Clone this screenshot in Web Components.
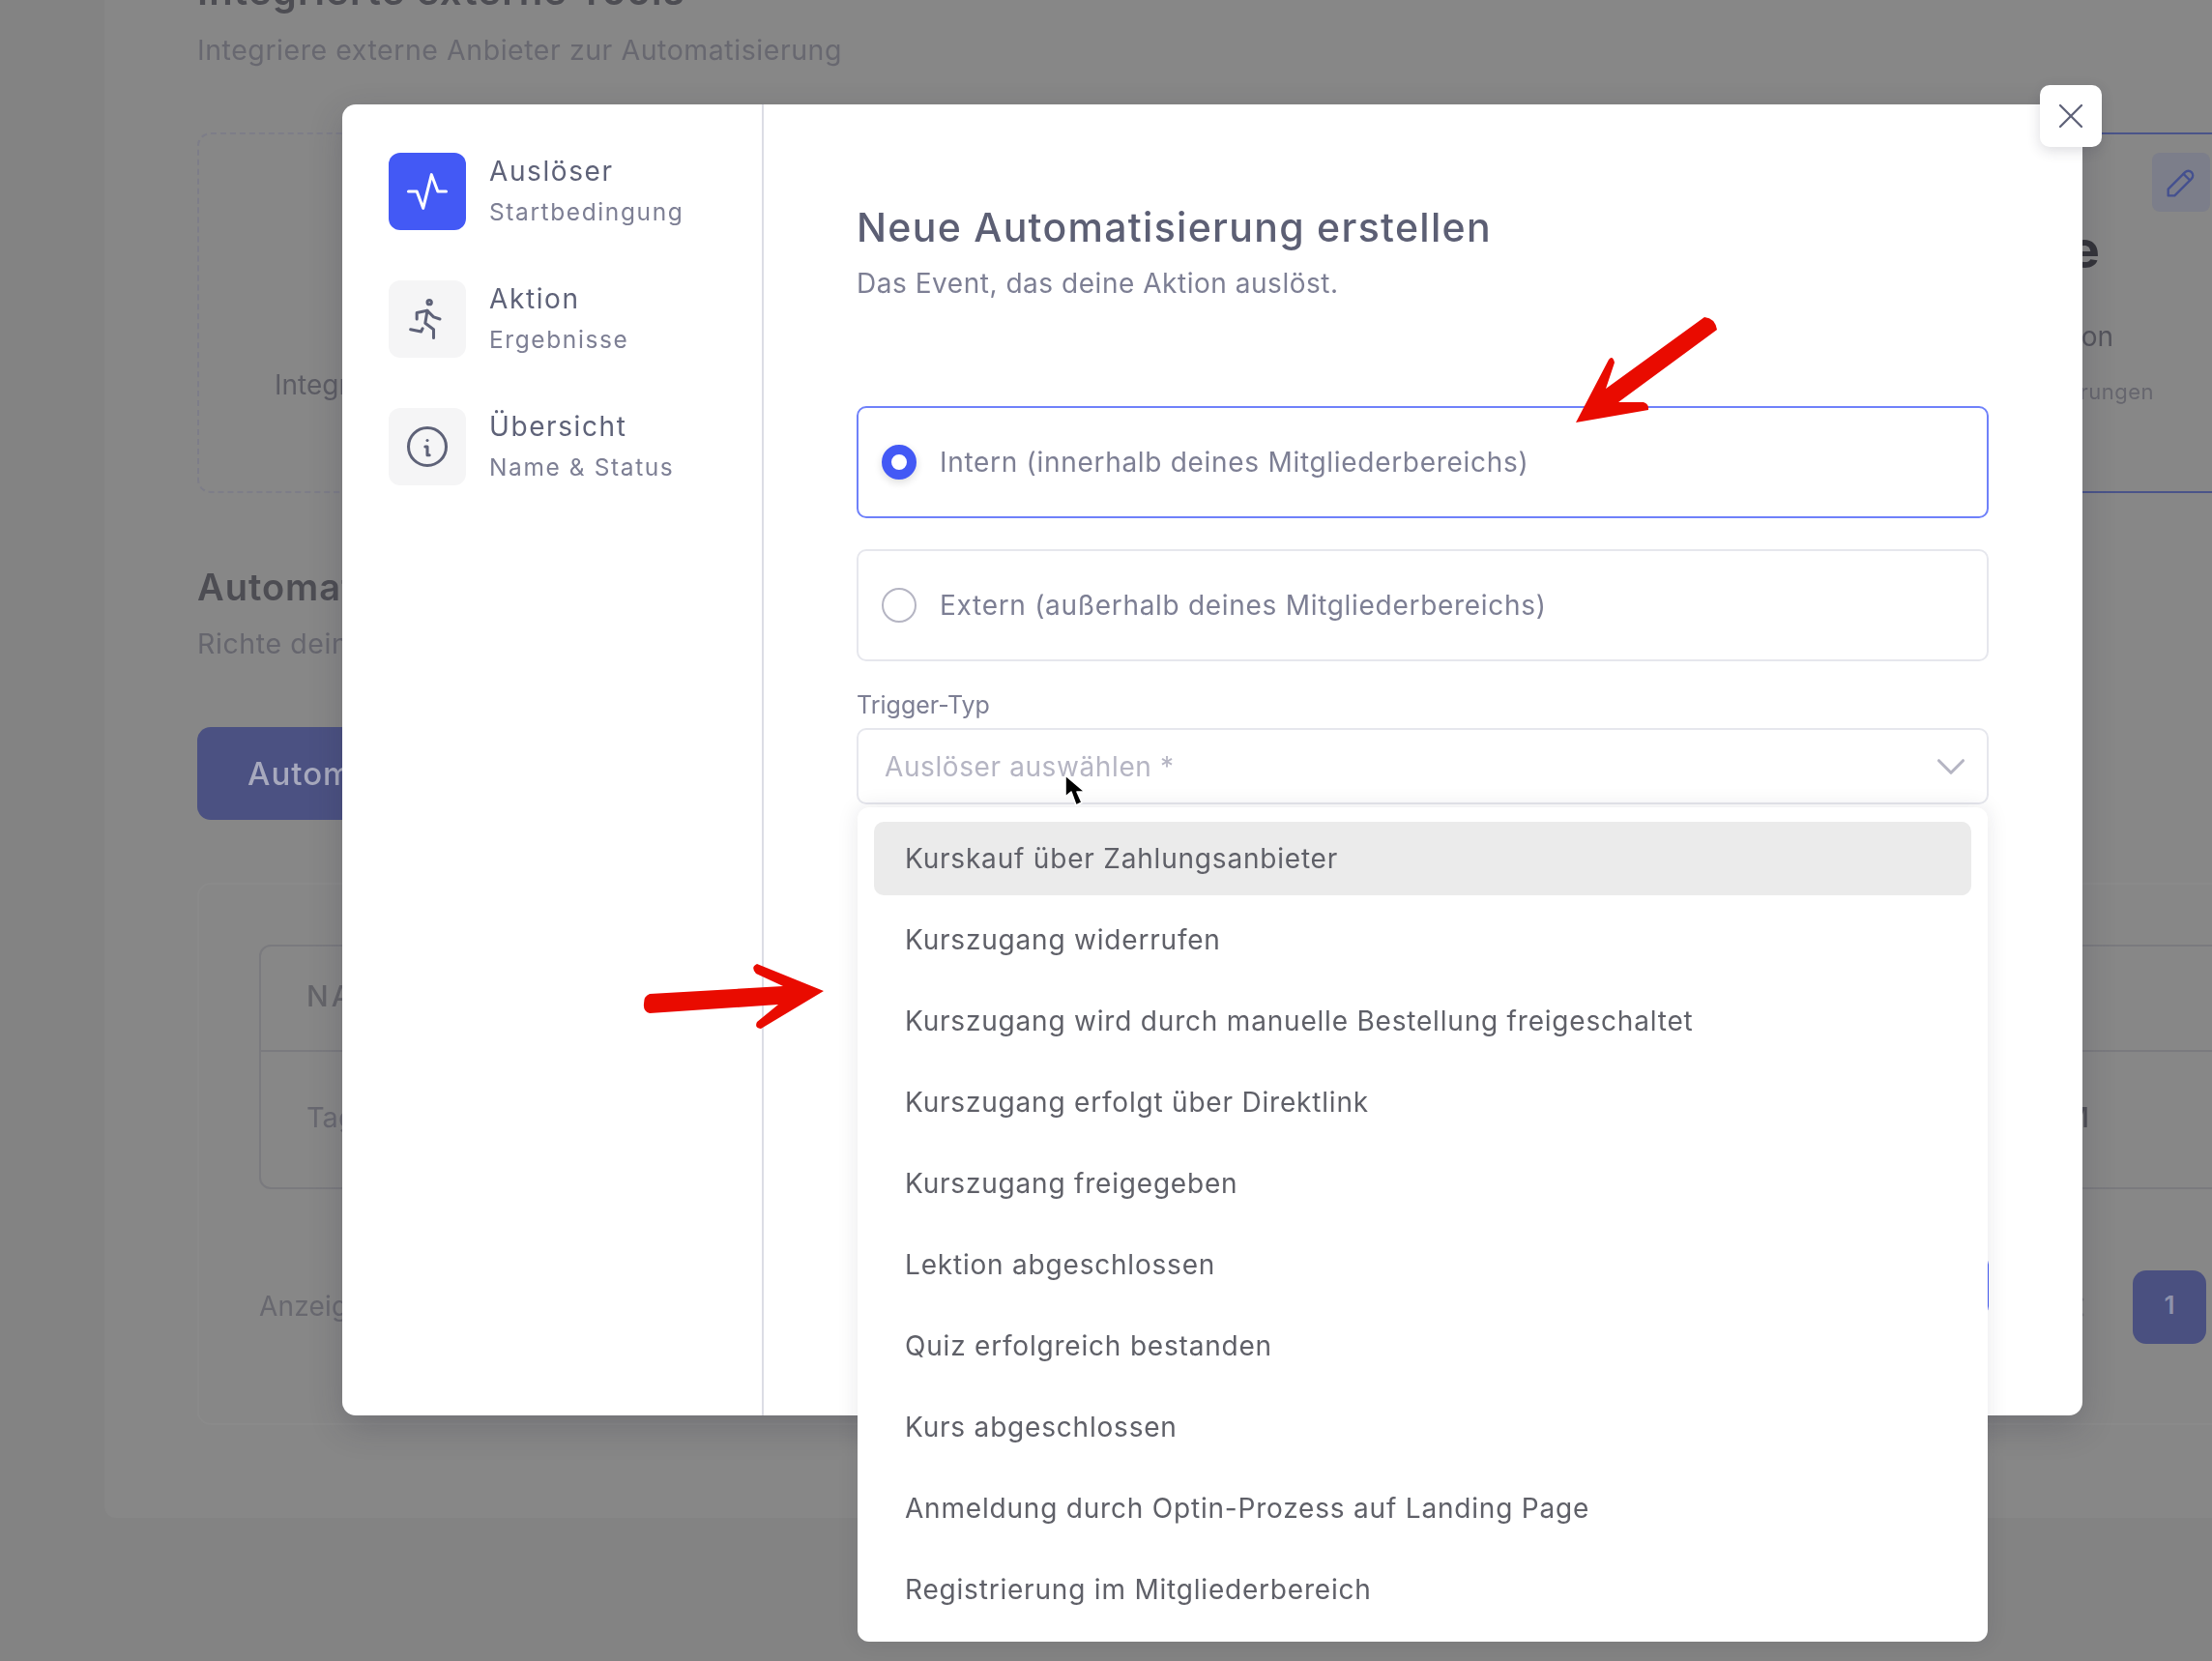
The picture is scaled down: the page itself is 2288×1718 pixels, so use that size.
<!DOCTYPE html>
<html lang="de">
<head>
<meta charset="utf-8">
<title>Automatisierung</title>
<style>
    html, body { margin: 0; padding: 0; }
    body { width: 2288px; height: 1718px; overflow: hidden; background: #838383; font-family: Inter, "Noto Sans", sans-serif; }
</style>
</head>
<body>
<app-stage>
    <backdrop-page></backdrop-page>
    <automation-modal>
        <step-item slot="steps" icon="activity" active label="Auslöser" hint="Startbedingung"></step-item>
        <step-item slot="steps" icon="run" label="Aktion" hint="Ergebnisse"></step-item>
        <step-item slot="steps" icon="info" label="Übersicht" hint="Name &amp; Status"></step-item>
        <radio-card checked>Intern (innerhalb deines Mitgliederbereichs)</radio-card>
        <radio-card>Extern (außerhalb deines Mitgliederbereichs)</radio-card>
        <trigger-select label="Trigger-Typ" placeholder="Auslöser auswählen *">
            <option-item selected>Kurskauf über Zahlungsanbieter</option-item>
            <option-item>Kurszugang widerrufen</option-item>
            <option-item>Kurszugang wird durch manuelle Bestellung freigeschaltet</option-item>
            <option-item>Kurszugang erfolgt über Direktlink</option-item>
            <option-item>Kurszugang freigegeben</option-item>
            <option-item>Lektion abgeschlossen</option-item>
            <option-item>Quiz erfolgreich bestanden</option-item>
            <option-item>Kurs abgeschlossen</option-item>
            <option-item>Anmeldung durch Optin-Prozess auf Landing Page</option-item>
            <option-item>Registrierung im Mitgliederbereich</option-item>
        </trigger-select>
    </automation-modal>
    <screen-notes></screen-notes>
</app-stage>

<script>
const ICONS = {
    activity: '<path d="M3 12h4l3 8l4 -16l3 8h4"/>',
    run: '<path d="M12 4a1 1 0 1 0 2 0a1 1 0 1 0 -2 0"/><path d="M4 17l5 1l.75 -1.5"/><path d="M15 21l0 -4l-4 -3l1 -6"/><path d="M7 12l0 -3l5 -1l3 3l3 1"/>',
    info: '<path d="M3 12a9 9 0 1 0 18 0a9 9 0 0 0 -18 0"/><path d="M12 9h.01"/><path d="M11 12h1v4h1"/>',
    close: '<path d="M18 6l-12 12"/><path d="M6 6l12 12"/>',
    chevron: '<path d="M6 9l6 6l6 -6"/>',
    back: '<path d="M15 6l-6 6l6 6"/>',
    pencil: '<path d="M4 20h4l10.5 -10.5a2.828 2.828 0 1 0 -4 -4l-10.5 10.5v4"/><path d="M13.5 6.5l4 4"/>'
};

class TablerIcon extends HTMLElement {
    constructor() {
        super();
        this.shadowDOM = this.attachShadow({mode: "open"});
    }

    connectedCallback() {
        const size = this.getAttribute("size") || 24;
        const stroke = this.getAttribute("stroke") || 1.4;
        this.shadowDOM.innerHTML = `
            <style>
                :host { display: block; width: ${size}px; height: ${size}px; }
                svg { display: block; }
            </style>
            <svg width="${size}" height="${size}" viewBox="0 0 24 24" fill="none" stroke="currentColor"
                 stroke-width="${stroke}" stroke-linecap="round" stroke-linejoin="round">${ICONS[this.getAttribute("name")]}</svg>`;
    }
}

class AppStage extends HTMLElement {
    constructor() {
        super();
        this.shadowDOM = this.attachShadow({mode: "open"});
        this.shadowDOM.innerHTML = `
            <style>
                :host { display: block; position: relative; width: 2288px; height: 1718px; overflow: hidden; }
            </style>
            <slot></slot>`;
    }
}

class BackdropPage extends HTMLElement {
    constructor() {
        super();
        this.shadowDOM = this.attachShadow({mode: "open"});
        this.shadowDOM.innerHTML = `
            <style>
                * { margin: 0; padding: 0; box-sizing: border-box; }
                :host { display: block; height: 1718px; overflow: hidden; filter: blur(.6px); }
                .sheet {
                    display: flow-root;
                    width: 2202px;
                    height: 1570px;
                    margin-left: 108px;
                    padding: 0 0 0 96px;
                    background: #878787;
                    border-radius: 0 0 0 12px;
                    color: #4d4d53;
                }
                h1 { margin-top: -31px; font-size: 40px; line-height: 44px; font-weight: 600; letter-spacing: 1.2px; }
                .lead { margin-top: 21px; font-size: 28.5px; line-height: 36px; color: #686870; letter-spacing: .55px; }
                .tools { display: flex; gap: 90px; margin-top: 67px; height: 373px; }
                .dashed {
                    width: 560px;
                    border: 2px dashed #7d7d88;
                    border-radius: 14px;
                    padding: 241px 0 0 78px;
                    font-size: 28px;
                    line-height: 36px;
                    color: #5c5c64;
                }
                .linked {
                    position: relative;
                    flex: 1;
                    border: 2px solid #4a5489;
                    border-radius: 14px;
                    padding-top: 89px;
                    text-align: right;
                }
                .linked b { display: block; margin-right: 136px; font-size: 54px; line-height: 60px; font-weight: 700; color: #34343a; }
                .linked span { display: block; margin-top: 42px; margin-right: 122px; font-size: 28px; line-height: 36px; color: #54545c; }
                .linked small { display: block; margin-top: 25px; margin-right: 80px; font-size: 22px; line-height: 28px; color: #66666e; letter-spacing: .5px; }
                .edit {
                    position: absolute;
                    top: 19px;
                    right: 22px;
                    display: flex;
                    align-items: center;
                    justify-content: center;
                    width: 60px;
                    height: 61px;
                    border-radius: 8px;
                    background: #7c7e8a;
                    color: #44508f;
                }
                h2 { margin-top: 74px; font-size: 38px; line-height: 46px; font-weight: 600; color: #4d4d53; letter-spacing: 1px; }
                .lead2 { margin-top: 18px; font-size: 28.5px; line-height: 36px; color: #66666e; letter-spacing: .6px; }
                .create {
                    display: block;
                    width: 520px;
                    height: 96px;
                    margin-top: 68px;
                    padding-left: 52px;
                    border-radius: 14px;
                    background: #4b5182;
                    color: #a7a9bd;
                    font-size: 33px;
                    line-height: 96px;
                    font-weight: 500;
                    letter-spacing: 1px;
                }
                .table-card {
                    margin-top: 65px;
                    height: 561px;
                    padding: 62px 0 0 62px;
                    border: 2px solid #8a8a8a;
                    border-radius: 14px;
                }
                .table { border: 2px solid #7a7a7e; border-radius: 12px; height: 253px; }
                .row { display: flex; justify-content: space-between; align-items: center; padding: 0 145px 0 47px; }
                .row span { margin-top: -5px; }
                .row.head { height: 109px; border-bottom: 2px solid #7a7a7e; font-size: 30px; letter-spacing: 3px; color: #646469; font-weight: 500; }
                .row.body { height: 140px; font-size: 29px; color: #686870; }
                .row.body b { margin-top: -5px; font-weight: 500; color: #4f4f55; }
                .pager { display: flex; align-items: center; justify-content: space-between; margin-top: 84px; padding-right: 26px; height: 76px; font-size: 28px; color: #68686f; letter-spacing: .2px; }
                .pager > span { margin-top: -3px; }
                .pager div { display: flex; align-items: center; gap: 40px; }
                .pager tabler-icon { color: #707075; }
                .pager i {
                    display: block;
                    width: 76px;
                    height: 76px;
                    border-radius: 14px;
                    background: #4a5080;
                    color: #8f92ab;
                    font-style: normal;
                    font-weight: 600;
                    text-align: center;
                    line-height: 72px;
                    font-size: 26px;
                }
            </style>
            <div class="sheet">
                <h1>Integrierte externe Tools</h1>
                <p class="lead">Integriere externe Anbieter zur Automatisierung</p>
                <div class="tools">
                    <div class="dashed">Integration hinzufügen</div>
                    <div class="linked">
                        <div class="edit"><tabler-icon name="pencil" size="40" stroke="1.4"></tabler-icon></div>
                        <b>Make</b>
                        <span>Integration</span>
                        <small>Automatisierungen</small>
                    </div>
                </div>
                <h2>Automatisierungen</h2>
                <p class="lead2">Richte deine Automatisierungen ein</p>
                <div class="create">Automatisierung erstellen</div>
                <div class="table-card">
                    <div class="table">
                        <div class="row head"><span>NAME</span><span></span></div>
                        <div class="row body"><span>Tag</span><b>PM</b></div>
                    </div>
                    <div class="pager">
                        <span>Anzeigen</span>
                        <div><tabler-icon name="back" size="32" stroke="2"></tabler-icon><i>1</i></div>
                    </div>
                </div>
            </div>`;
    }
}

class AutomationModal extends HTMLElement {
    constructor() {
        super();
        this.shadowDOM = this.attachShadow({mode: "open"});
        this.shadowDOM.innerHTML = `
            <style>
                * { margin: 0; padding: 0; box-sizing: border-box; }
                :host {
                    position: absolute;
                    left: 354px;
                    top: 108px;
                    display: flex;
                    width: 1800px;
                    height: 1356px;
                    border-radius: 14px;
                    background: #fff;
                    box-shadow: 0 12px 34px rgba(40, 40, 60, .22);
                }
                .side {
                    display: flex;
                    flex-direction: column;
                    gap: 52px;
                    width: 436px;
                    padding: 50px 0 0 48px;
                    border-right: 2px solid #dcdde5;
                }
                .main {
                    display: flex;
                    flex-direction: column;
                    flex: none;
                    width: 1171px;
                    margin-left: 96px;
                    padding: 101px 0 103px;
                }
                h1 { font-size: 41px; line-height: 52px; font-weight: 500; color: #5c5f74; letter-spacing: 1.3px; }
                p { margin-top: 14px; margin-bottom: 109px; font-size: 28px; line-height: 36px; color: #7d7f94; letter-spacing: .53px; }
                .cards { display: flex; flex-direction: column; gap: 32px; }
                .next {
                    align-self: flex-end;
                    width: 200px;
                    height: 63px;
                    margin-top: auto;
                    border-radius: 10px;
                    background: #4359f5;
                    color: #fff;
                    font-size: 26px;
                    line-height: 63px;
                    text-align: center;
                }
                .close {
                    position: absolute;
                    top: -20px;
                    right: -20px;
                    display: flex;
                    align-items: center;
                    justify-content: center;
                    width: 64px;
                    height: 64px;
                    border-radius: 10px;
                    background: #fff;
                    color: #5e6278;
                    box-shadow: 0 4px 14px rgba(40, 40, 60, .16);
                }
            </style>
            <div class="side"><slot name="steps"></slot></div>
            <div class="main">
                <h1>Neue Automatisierung erstellen</h1>
                <p>Das Event, das deine Aktion auslöst.</p>
                <div class="cards"><slot></slot></div>
                <div class="next">Weiter</div>
            </div>
            <div class="close"><tabler-icon name="close" size="44" stroke="1.25"></tabler-icon></div>`;
    }
}

class StepItem extends HTMLElement {
    constructor() {
        super();
        this.shadowDOM = this.attachShadow({mode: "open"});
    }

    connectedCallback() {
        const active = this.hasAttribute("active");
        this.shadowDOM.innerHTML = `
            <style>
                * { margin: 0; padding: 0; box-sizing: border-box; }
                :host { display: flex; align-items: center; gap: 24px; height: 80px; }
                .box {
                    display: flex;
                    align-items: center;
                    justify-content: center;
                    width: 80px;
                    height: 80px;
                    border-radius: 12px;
                    background: ${active ? "#4359f5" : "#f5f5f6"};
                    color: ${active ? "#fff" : "#5e6278"};
                }
                b { display: block; margin-top: -4px; font-size: 28px; line-height: 36px; font-weight: 400; color: #5e6278; letter-spacing: 1.6px; }
                span { display: block; margin-top: 9px; font-size: 24.5px; line-height: 30px; color: #7d7f94; letter-spacing: 1.6px; }
            </style>
            <div class="box"><tabler-icon name="${this.getAttribute("icon")}" size="52"></tabler-icon></div>
            <div>
                <b>${this.getAttribute("label")}</b>
                <span>${this.getAttribute("hint")}</span>
            </div>`;
    }
}

class RadioCard extends HTMLElement {
    constructor() {
        super();
        this.shadowDOM = this.attachShadow({mode: "open"});
    }

    connectedCallback() {
        const checked = this.hasAttribute("checked");
        this.shadowDOM.innerHTML = `
            <style>
                * { box-sizing: border-box; }
                :host {
                    box-sizing: border-box;
                    display: flex;
                    align-items: center;
                    gap: 24px;
                    height: 116px;
                    padding-left: 24px;
                    border: 2px solid ${checked ? "#6f81fa" : "#e6e7ed"};
                    border-radius: 10px;
                    font-size: 28px;
                    letter-spacing: .7px;
                    color: #7d7f94;
                }
                .dot {
                    width: 36px;
                    height: 36px;
                    border-radius: 50%;
                    background: #fff;
                    border: ${checked ? "10px solid #4359f5" : "2px solid #b5b5c3"};
                    ${checked ? "box-shadow: 0 3px 8px rgba(0, 0, 0, .14);" : ""}
                }
            </style>
            <div class="dot"></div>
            <slot></slot>`;
    }
}

class TriggerSelect extends HTMLElement {
    constructor() {
        super();
        this.shadowDOM = this.attachShadow({mode: "open"});
    }

    connectedCallback() {
        this.shadowDOM.innerHTML = `
            <style>
                * { margin: 0; padding: 0; box-sizing: border-box; }
                :host { display: block; position: relative; margin-top: -2px; }
                label { display: block; font-size: 25px; line-height: 30px; color: #7d7f94; }
                .field {
                    display: flex;
                    align-items: center;
                    justify-content: space-between;
                    height: 79px;
                    margin-top: 9px;
                    padding: 0 12px 0 27px;
                    border: 2px solid #e6e7ed;
                    border-radius: 10px;
                    font-size: 28px;
                    letter-spacing: .6px;
                    color: #b5b5c3;
                }
                .field tabler-icon { color: #b5b5c3; }
                .list {
                    position: absolute;
                    top: 121px;
                    left: 1px;
                    right: 1px;
                    z-index: 2;
                    display: flex;
                    flex-direction: column;
                    gap: 8px;
                    padding: 15px 17px 16px;
                    border-radius: 12px;
                    background: #fff;
                    box-shadow: 0 0 22px rgba(30, 30, 50, .1);
                }
            </style>
            <label>${this.getAttribute("label")}</label>
            <div class="field">
                <span>${this.getAttribute("placeholder")}</span>
                <tabler-icon name="chevron" size="50" stroke="1.5"></tabler-icon>
            </div>
            <div class="list"><slot></slot></div>`;
    }
}

class OptionItem extends HTMLElement {
    constructor() {
        super();
        this.shadowDOM = this.attachShadow({mode: "open"});
    }

    connectedCallback() {
        this.shadowDOM.innerHTML = `
            <style>
                :host {
                    display: flex;
                    align-items: center;
                    height: 76px;
                    padding-left: 32px;
                    border-radius: 10px;
                    font-size: 28px;
                    letter-spacing: .8px;
                    color: #5f6068;
                    background: ${this.hasAttribute("selected") ? "#ebebeb" : "transparent"};
                }
            </style>
            <slot></slot>`;
    }
}

// red arrows and the mouse pointer sit on top of the screenshot
class ScreenNotes extends HTMLElement {
    constructor() {
        super();
        this.shadowDOM = this.attachShadow({mode: "open"});
        this.shadowDOM.innerHTML = `
            <style>
                :host { position: absolute; inset: 0; pointer-events: none; z-index: 5; }
                svg { display: block; }
            </style>
            <svg width="2288" height="1718" viewBox="0 0 2288 1718">
                <path fill="#e90b00" d="M1763 328Q1774 329 1776 341L1674 416L1700 416Q1706 418 1705 424L1630 437L1664 372Q1668 367 1670 375L1661 402Z"/>
                <path fill="#e90b00" d="M672 1028L810 1020L782 1007Q776 1000 783 997L852 1025L787 1064Q780 1063 783 1057L805 1039L672 1048Q665 1046 666 1038Q666 1030 672 1028Z"/>
                <path fill="#000" stroke="#fff" stroke-width="1.6" stroke-linejoin="round" d="M1102 802L1102 824L1108 819L1113 833L1119 830L1114 819L1122 819Z"/>
            </svg>`;
    }
}

customElements.define("tabler-icon", TablerIcon);
customElements.define("app-stage", AppStage);
customElements.define("backdrop-page", BackdropPage);
customElements.define("automation-modal", AutomationModal);
customElements.define("step-item", StepItem);
customElements.define("radio-card", RadioCard);
customElements.define("trigger-select", TriggerSelect);
customElements.define("option-item", OptionItem);
customElements.define("screen-notes", ScreenNotes);
</script>
</body>
</html>
